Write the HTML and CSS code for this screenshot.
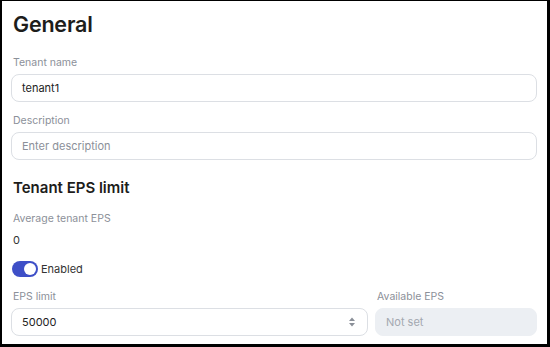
FILE: index.html
```html
<!DOCTYPE html>
<html>
<head>
<meta charset="utf-8">
<link rel="stylesheet" href="styles.css">
</head>
<body>
<div class="frame">
  <h1 class="title">General</h1>
  <div class="field">
    <div class="label">Tenant name</div>
    <div class="input"><span class="value">tenant1</span></div>
  </div>
  <div class="field">
    <div class="label">Description</div>
    <div class="input"><span class="placeholder">Enter description</span></div>
  </div>
  <h2 class="subtitle">Tenant EPS limit</h2>
  <div class="label">Average tenant EPS</div>
  <div class="stat">0</div>
  <div class="toggle-row">
    <span class="toggle"><span class="knob"></span></span>
    <span class="toggle-label">Enabled</span>
  </div>
  <div class="row">
    <div class="field grow">
      <div class="label">EPS limit</div>
      <div class="input spin">
        <span class="value">50000</span>
        <svg class="spinner" width="8" height="12" viewBox="0 0 8 12"><path d="M1 5 L4 1.5 L7 5 Z" fill="#8a8f98"/><path d="M1 7 L4 10.5 L7 7 Z" fill="#8a8f98"/></svg>
      </div>
    </div>
    <div class="field side">
      <div class="label">Available EPS</div>
      <div class="input disabled"><span class="placeholder">Not set</span></div>
    </div>
  </div>
</div>
</body>
</html>
```
FILE: styles.css
```css
html, body {
  margin: 0;
  padding: 0;
  background: #fff;
}
body {
  font-family: Inter, "Noto Sans", sans-serif;
  color: #1f1f1f;
}
.frame {
  box-sizing: border-box;
  width: 550px;
  height: 347px;
  border-top: 1px solid #000;
  border-left: 2px solid #000;
  border-right: 3px solid #000;
  border-bottom: 3px solid #000;
  padding: 0 10px 0 9px;
  overflow: hidden;
}
.title {
  margin: 9px 0 0 2px;
  font-size: 21.5px;
  font-weight: 600;
  line-height: 28px;
  letter-spacing: -0.2px;
  color: #1d1d1b;
}
.field {
  display: flex;
  flex-direction: column;
}
.label {
  font-size: 10.5px;
  line-height: 14px;
  color: #8c9099;
  margin-left: 2px;
}
.frame > .field:first-of-type {
  margin-top: 18px;
}
.field .label {
  margin-bottom: 4px;
}
.input {
  box-sizing: border-box;
  height: 28px;
  border: 1px solid #dcdfe4;
  border-radius: 8px;
  display: flex;
  align-items: center;
  padding: 0 10px;
  font-size: 11px;
}
.field + .field {
  margin-top: 12px;
}
.value {
  color: #222;
}
.placeholder {
  color: #8c9099;
}
.subtitle {
  margin: 18px 0 0 2px;
  font-size: 15px;
  font-weight: 600;
  line-height: 20px;
  color: #1d1d1b;
}
.subtitle + .label {
  margin-top: 14px;
}
.stat {
  margin: 7px 0 0 2px;
  font-size: 11px;
  line-height: 14px;
  color: #333;
}
.toggle-row {
  display: flex;
  align-items: center;
  gap: 3px;
  margin: 14px 0 0 1px;
  font-size: 11px;
}
.toggle {
  box-sizing: border-box;
  width: 26px;
  height: 16px;
  border-radius: 8px;
  background: #3e4fc7;
  display: flex;
  align-items: center;
  justify-content: flex-end;
  padding: 2px;
}
.knob {
  width: 12px;
  height: 12px;
  border-radius: 50%;
  background: #fff;
}
.toggle-label {
  color: #333;
}
.row {
  display: flex;
  gap: 7px;
  margin-top: 13px;
}
.grow {
  flex: 1;
}
.side {
  width: 162px;
}
.row .field + .field {
  margin-top: 0;
}
.spin {
  justify-content: space-between;
  padding-right: 11px;
}
.disabled {
  background: #eceff3;
  border-color: #eceff3;
}
.disabled .placeholder {
  color: #a3a8b0;
}
```
